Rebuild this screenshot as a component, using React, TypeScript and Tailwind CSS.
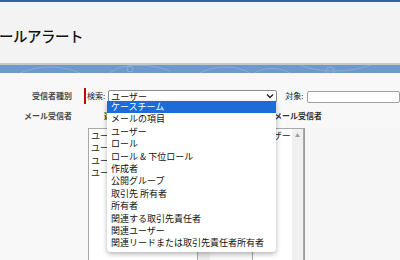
import React from "react";

const items = [
  "ケースチーム",
  "メールの項目",
  "ユーザー",
  "ロール",
  "ロール & 下位ロール",
  "作成者",
  "公開グループ",
  "取引先 所有者",
  "所有者",
  "関連する取引先責任者",
  "関連ユーザー",
  "関連リードまたは取引先責任者所有者",
];

export default function App() {
  return (
    <div className="relative w-[400px] h-[260px] overflow-hidden bg-[#f8f8f8] font-['Noto_Sans_CJK_JP',sans-serif] text-[#222]">
      <div className="h-[2px] bg-[#2f63a6]" />
      <div className="h-[61px] bg-[#f3f3f3] flex items-center pt-[6px]">
        <span className="text-[14.5px] font-medium text-[#111] tracking-[-0.5px] -ml-[1px]">ールアラート</span>
      </div>
      <div className="h-[2px] bg-[#c9c9c9]" />
      <div className="h-[8px] bg-[#6d99cc] overflow-hidden">
        <svg width="400" height="8" viewBox="0 0 400 8">
          <g fill="none" stroke="#9bbbe0" strokeWidth="0.8" opacity="0.8">
            <path d="M20 8 C 40 0, 60 0, 80 8" />
            <path d="M110 8 C 120 -2, 150 -2, 170 6" />
            <path d="M200 8 C 215 0, 235 0, 250 8" />
            <path d="M255 8 C 262 2, 280 2, 290 8" />
            <path d="M300 0 C 320 8, 350 8, 370 0" />
            <circle cx="130" cy="4" r="3" />
            <circle cx="330" cy="6" r="4" />
          </g>
        </svg>
      </div>
      <div className="pt-[15px]">
        <div className="flex items-center h-[16px]">
          <div className="w-[72px] text-right text-[8px] font-bold text-[#4a4a4a]">受信者種別</div>
          <div className="ml-[12px] w-[2px] h-[16px] bg-[#c00]" />
          <span className="ml-[1px] text-[8px] text-[#222]">検索:</span>
          <div className="ml-[3px] w-[169px] h-[13px] bg-white border border-[#8a8a8a] rounded-[2px] flex items-center justify-between px-[2px]">
            <span className="text-[9px] leading-none text-[#111]">ユーザー</span>
            <svg width="8" height="6" viewBox="0 0 8 6"><path d="M1 1.5 L4 4.5 L7 1.5" fill="none" stroke="#222" strokeWidth="1.4" /></svg>
          </div>
          <span className="ml-[8px] text-[8px] text-[#222]">対象:</span>
          <div className="ml-[4px] flex-1 h-[12px] bg-white border border-[#a0a0a0] rounded-[2px] mt-[2px]" />
        </div>
        <div className="flex items-center h-[19px] mt-[2px]">
          <div className="w-[72px] text-right text-[8px] font-bold text-[#4a4a4a]">メール受信者</div>
          <div className="ml-[32px] text-[8px] font-bold text-[#333]">選択可能</div>
          <div className="ml-[138px] text-[8px] font-bold text-[#333]">メール受信者</div>
        </div>
        <div className="flex mt-[3px]">
          <div className="ml-[88px] w-[110px] h-[140px] bg-white border border-[#a8a8a8] text-[9px] leading-[12.4px] pl-[2px] pt-[1px]">
            <div>ユーザー</div>
            <div>ユーザー</div>
            <div>ユーザー</div>
            <div>ユーザー</div>
          </div>
          <div className="w-[12px] h-[140px] bg-[#ececec]" />
          <div className="ml-[42px] w-[52px] h-[140px] bg-white border border-[#a8a8a8] flex">
            <div className="flex-1 text-[9px] pl-[2px] pt-[1px] leading-[12.4px]">ユーザー</div>
            <div className="w-[11px] bg-[#f0f0f0] flex justify-center pt-[4px]">
              <svg width="5" height="4" viewBox="0 0 5 4"><path d="M0 4 L2.5 0 L5 4 Z" fill="#a0a0a0" /></svg>
            </div>
          </div>
          <div className="flex-1 h-[140px] border-l border-[#9a9a9a] bg-[#f6f6f6]" />
        </div>
      </div>
      <div className="absolute left-[107px] top-[101px] w-[169px] bg-white rounded-b-[4px] shadow-[0_2px_5px_rgba(0,0,0,0.3)] overflow-hidden text-[9px] text-[#111]">
        {items.map((t, i) => (
          <div
            key={t}
            className={
              i === 0
                ? "h-[12.4px] leading-[12.4px] pl-[4px] bg-[#1b6bd8] text-white whitespace-nowrap"
                : "h-[12.4px] leading-[12.4px] pl-[4px] whitespace-nowrap"
            }
          >
            {t}
          </div>
        ))}
        <div className="h-[2px]" />
      </div>
    </div>
  );
}
